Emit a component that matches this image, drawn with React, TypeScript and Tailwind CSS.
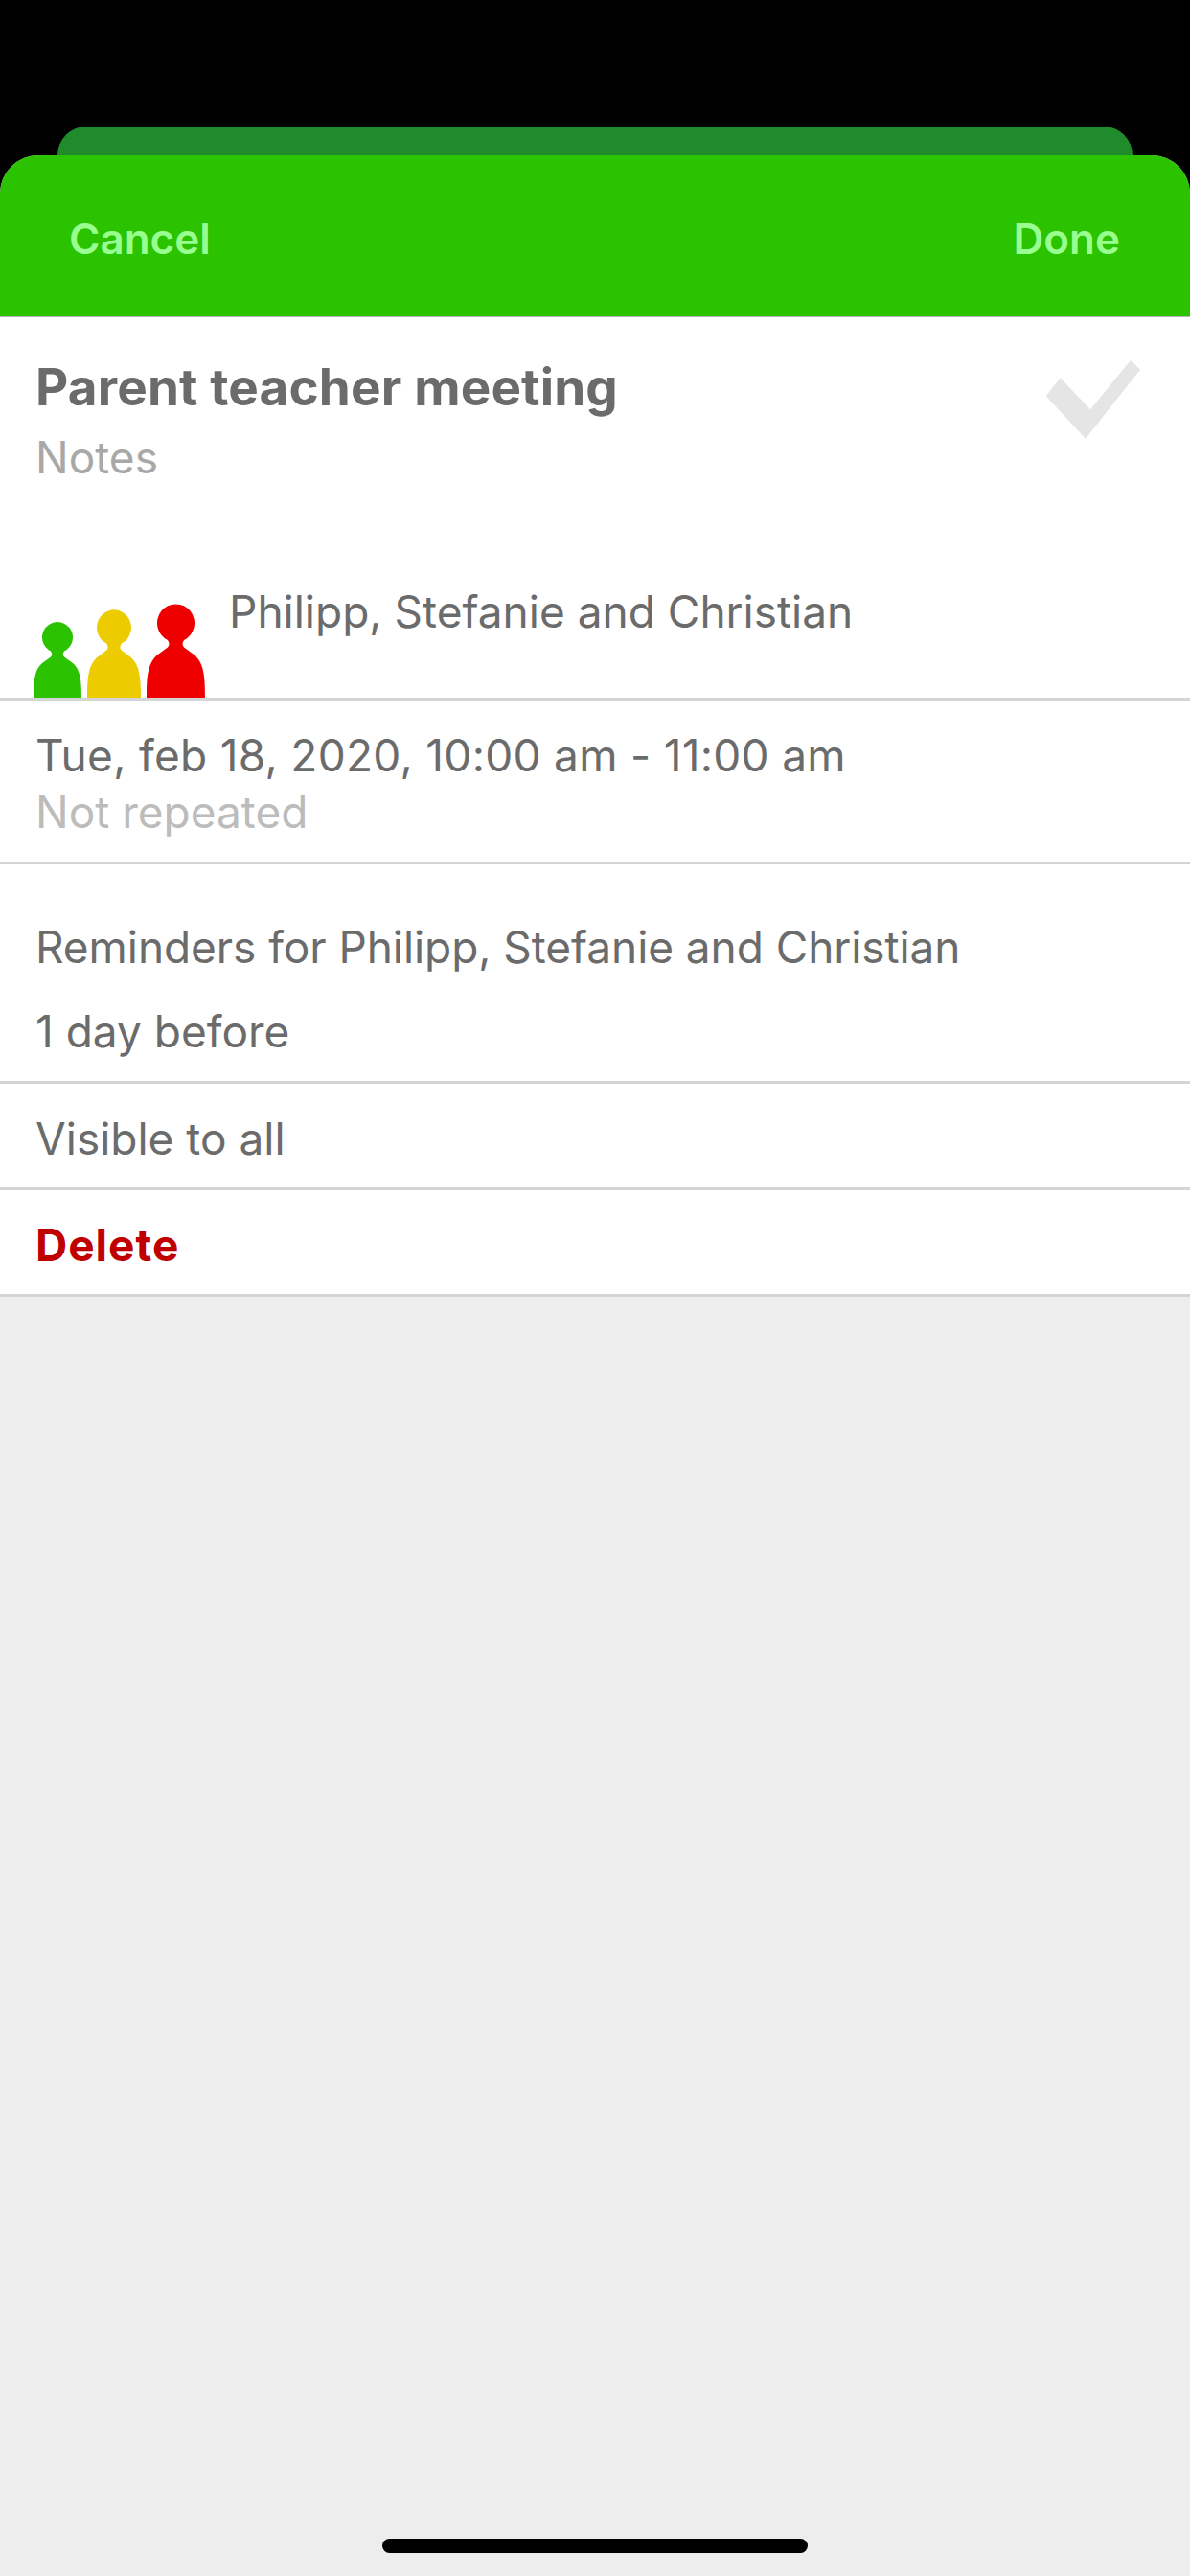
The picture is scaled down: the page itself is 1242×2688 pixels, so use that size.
function Person({ color, className }: { color: string; className: string }) {
  return (
    <svg viewBox="0 0 50 80" preserveAspectRatio="none" className={className}>
      <path
        fill={color}
        d="M0 80C0 62 1 51 9 44Q14 40.500 18 37.500Q20.500 35 18 31.500A16 16 0 1 1 32 31.500Q29.500 35 32 37.500Q36 40.500 41 44C49 51 50 62 50 80Z"
      />
    </svg>
  );
}

function Divider() {
  return <div className="h-[3px] bg-[#d4d4d4]" />;
}

export default function App() {
  return (
    <div
      className="flex h-[2688px] w-[1242px] flex-col bg-black text-[46px] leading-[50px] text-[#6b6b6b]"
      style={{ fontFamily: "Inter, 'Liberation Sans', sans-serif" }}
    >
      {/* stacked sheets */}
      <div className="h-[132px] shrink-0" />
      <div className="mx-[60px] h-[30px] shrink-0 rounded-t-[30px] bg-[#1f8b2a]" />
      <div className="flex min-h-0 flex-1 flex-col overflow-hidden rounded-t-[40px] bg-[#ededed]">
        <header className="flex h-[169px] shrink-0 items-center justify-between border-b border-[#b5b5b5] bg-[#2bc200] pt-[5px] pr-[73px] pl-[72px] text-[44px] text-[#99ff90]">
          <span className="font-semibold">Cancel</span>
          <span className="font-semibold">Done</span>
        </header>

        <div className="bg-white">
          {/* title and participants */}
          <section className="relative h-[397px]">
            <div className="px-[37px] pt-[43px]">
              <h1 className="text-[53px] leading-[60px] font-bold tracking-[0.15px]">Parent teacher meeting</h1>
              <p className="mt-[18px] text-[#a8a8a8]">Notes</p>
            </div>
            <svg viewBox="0 0 100 82" className="absolute top-[45px] right-[51px] h-[82px] w-[100px]">
              <path fill="#e5e5e5" d="M15.7 18.3L0.7 37.3L42 81.7L99 9.7L89 0L47 51.3Z" />
            </svg>
            <div className="absolute inset-x-0 bottom-0 flex items-end pl-[35px]">
              <Person color="#2bc200" className="h-[80px] w-[50px]" />
              <Person color="#eccc00" className="ml-[6px] h-[93px] w-[56px]" />
              <Person color="#ee0000" className="ml-[6px] h-[99px] w-[61px]" />
              <p className="mb-[65px] ml-[25px]">Philipp, Stefanie and Christian</p>
            </div>
          </section>
          <Divider />

          <section className="h-[168px] px-[37px] pt-[32px]">
            <p className="tracking-[0.3px]">Tue, feb 18, 2020, 10:00 am - 11:00 am</p>
            <p className="mt-[9px] text-[#bcbcbc]">Not repeated</p>
          </section>
          <Divider />

          <section className="h-[226px] px-[37px] pt-[61px]">
            <p className="tracking-[-0.07px]">Reminders for Philipp, Stefanie and Christian</p>
            <p className="mt-[38px]">1 day before</p>
          </section>
          <Divider />

          <section className="flex h-[108px] items-center px-[37px] pt-[6px]">
            <p>Visible to all</p>
          </section>
          <Divider />

          <section className="flex h-[108px] items-center px-[37px] pt-[6px]">
            <p className="font-bold tracking-[1px] text-[#c00000]">Delete</p>
          </section>
          <Divider />
        </div>

        {/* home indicator */}
        <div className="mt-auto mb-[24px] h-[15px] w-[444px] self-center rounded-full bg-black" />
      </div>
    </div>
  );
}
